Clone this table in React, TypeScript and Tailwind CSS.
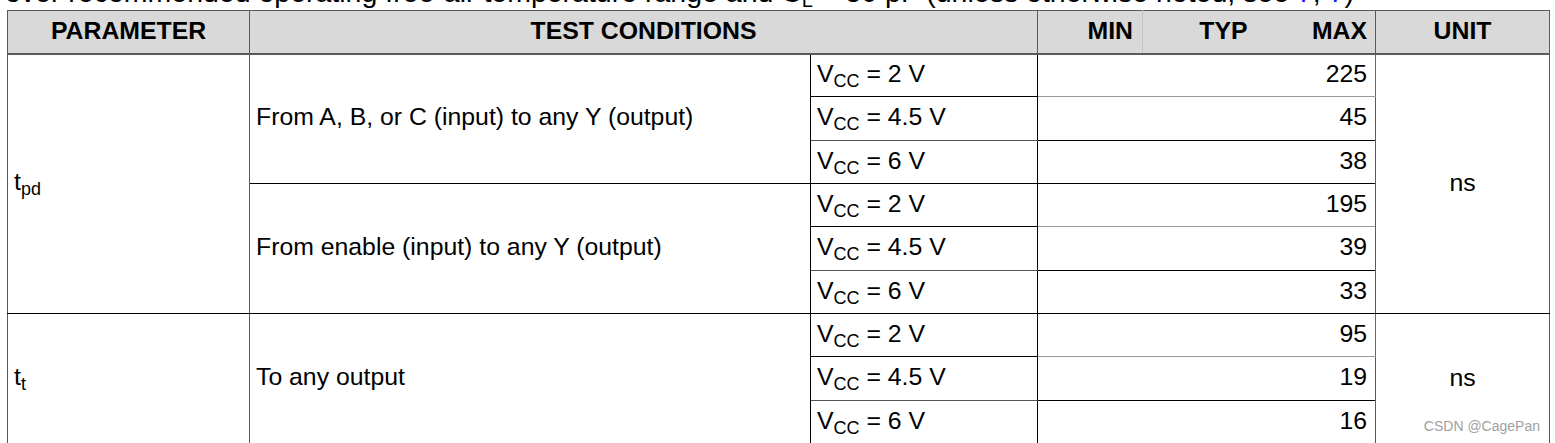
const groups = [
  {
    param: "pd",
    rows: [
      { cond: "From A, B, or C (input) to any Y (output)", items: [["2", "225"], ["4.5", "45"], ["6", "38"]] },
      { cond: "From enable (input) to any Y (output)", items: [["2", "195"], ["4.5", "39"], ["6", "33"]] },
    ],
  },
  {
    param: "t",
    rows: [{ cond: "To any output", items: [["2", "95"], ["4.5", "19"], ["6", "16"]] }],
  },
];

function Vcc({ v }: { v: string }) {
  return (
    <span>
      V<sub className="text-[18px] bottom-[-5px]">CC</sub> = {v} V
    </span>
  );
}

export default function App() {
  return (
    <div className="relative w-[1555px] h-[443px] overflow-hidden bg-white text-black font-['Liberation_Sans',Arial,sans-serif]">
      {/* caption, cut off at the top */}
      <p className="-mt-[24px] ml-[5px] text-[28.5px] leading-[32px] whitespace-nowrap">
        over recommended operating free-air temperature range and C<sub className="text-[20px]">L</sub> = 50 pF (unless
        otherwise noted; see <span className="text-[#1a1aff]">7</span>, <span className="text-[#1a1aff]">7</span>)
      </p>

      <table className="ml-[7px] mt-[2px] w-[1542px] table-fixed border-collapse text-[24.8px] leading-[28px]">
        <colgroup>
          <col className="w-[242px]" />
          <col className="w-[561px]" />
          <col className="w-[227px]" />
          <col className="w-[105px]" />
          <col className="w-[113px]" />
          <col className="w-[120px]" />
          <col className="w-[174px]" />
        </colgroup>
        <thead>
          <tr className="h-[43px] bg-[#d9d9d9] font-bold">
            <th className="border border-[#5a5a5a] border-b-2 text-center pb-[2px]">PARAMETER</th>
            <th colSpan={2} className="border border-[#5a5a5a] border-b-2 text-center pb-[2px]">
              TEST CONDITIONS
            </th>
            <th className="border-y-2 border-t border-l border-[#5a5a5a] border-r border-r-[#c4c4c4] text-right pr-[9px] pb-[2px]">MIN</th>
            <th className="border-y-2 border-t border-[#5a5a5a] border-x-[#c4c4c4] text-right pr-[8px] pb-[2px]">TYP</th>
            <th className="border-y-2 border-t border-[#5a5a5a] border-l-[#c4c4c4] text-right pr-[8px] pb-[2px]">MAX</th>
            <th className="border border-[#5a5a5a] border-b-2 text-center pb-[2px]">UNIT</th>
          </tr>
        </thead>
        <tbody>
          {groups.map((g, gi) => {
            const total = g.rows.reduce((n, r) => n + r.items.length, 0);
            return g.rows.map((r, ri) =>
              r.items.map(([v, max], ii) => (
                <tr key={`${gi}-${ri}-${ii}`} className={ii === 1 ? "h-[44px]" : "h-[43px]"}>
                  {ri === 0 && ii === 0 && (
                    <td rowSpan={total} className="border border-[#5a5a5a] border-b-black pl-[6px] pb-[4px] align-middle">
                      t<sub className="text-[18px] bottom-[-5px]">{g.param}</sub>
                    </td>
                  )}
                  {ii === 0 && (
                    <td rowSpan={r.items.length} className="border border-[#5a5a5a] border-b-black border-r-black pl-[6px] pb-[4px] align-middle">
                      {r.cond}
                    </td>
                  )}
                  <td className={`border border-black pl-[6px] pb-[3px] ${ii === 1 ? "border-b-[#555]" : ""}`}>
                    <Vcc v={v} />
                  </td>
                  <td
                    colSpan={3}
                    className={`border border-l-black border-r-[#666] text-right pr-[8px] pb-[3px] ${
                      ii === 0 ? "border-b-[#9a9a9a]" : "border-b-black"
                    }`}
                  >
                    {max}
                  </td>
                  {ri === 0 && ii === 0 && (
                    <td rowSpan={total} className="border border-[#5a5a5a] border-b-black text-center align-middle pb-[2px]">
                      ns
                    </td>
                  )}
                </tr>
              ))
            );
          })}
        </tbody>
      </table>

      <span className="absolute right-[15px] bottom-[10px] text-[14px] leading-none text-[#a0a0a0] font-['Liberation_Sans',Arial,sans-serif]">
        CSDN @CagePan
      </span>
    </div>
  );
}
